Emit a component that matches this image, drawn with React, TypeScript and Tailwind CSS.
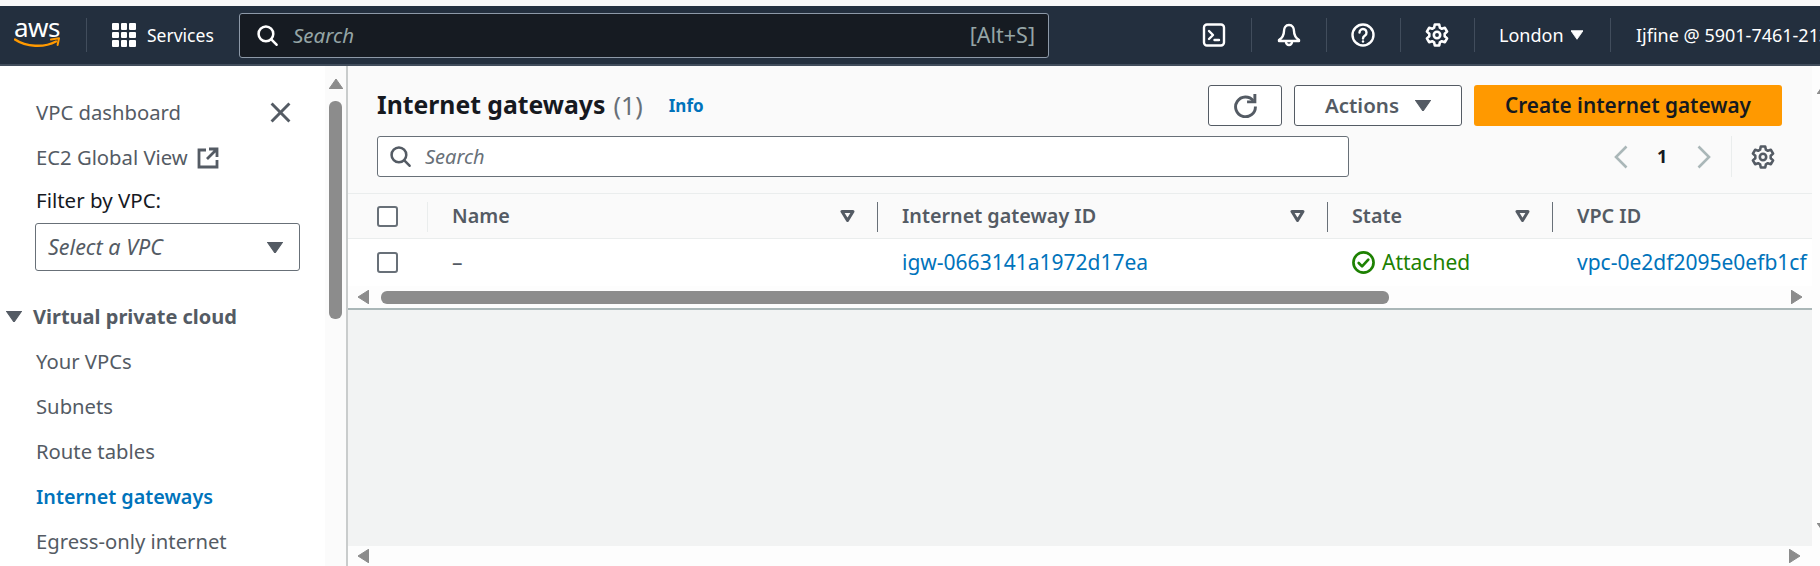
import React from 'react';

function Tri({ dir, className }: { dir: 'up' | 'down' | 'left' | 'right'; className: string }) {
  const pts = {
    up: '0,10 7,0 14,10',
    down: '0,0 14,0 7,10',
    left: '11,0 11,14 0,7',
    right: '0,0 0,14 11,7',
  }[dir];
  const box = dir === 'up' || dir === 'down' ? '0 0 14 10' : '0 0 11 14';
  return (
    <svg viewBox={box} className={className}>
      <polygon points={pts} fill="currentColor" stroke="currentColor" strokeLinejoin="round" strokeWidth="1" />
    </svg>
  );
}

function Gear({ className }: { className: string }) {
  return (
    <svg viewBox="0 0 24 24" fill="none" stroke="currentColor" strokeWidth="2.6" strokeLinejoin="round" className={className}>
      <path d="M9.8 1.5h4.4l.7 3.2 1.9 1.1 3.1-1 2.2 3.8-2.4 2.2v2.4l2.4 2.2-2.2 3.8-3.1-1-1.9 1.1-.7 3.2H9.8l-.7-3.2-1.9-1.1-3.1 1-2.2-3.8 2.4-2.2v-2.4L1.900 8.6 4.100 4.800l3.100 1 1.900-1.100z" />
      <circle cx="12" cy="12" r="3.2" />
    </svg>
  );
}

function SearchIcon({ className }: { className: string }) {
  return (
    <svg viewBox="0 0 20 20" fill="none" stroke="currentColor" strokeWidth="2.4" strokeLinecap="round" className={className}>
      <circle cx="8.5" cy="8.5" r="7" />
      <path d="M13.6 13.6 18.6 18.8" />
    </svg>
  );
}

function NavDivider({ className }: { className: string }) {
  return <div className={`w-px h-[34px] bg-[#414d5c] shrink-0 ${className}`} />;
}

function FilterIcon() {
  return (
    <svg viewBox="0 0 15 12" fill="none" stroke="currentColor" strokeWidth="3" strokeLinejoin="round" className="w-[15px] h-[12px] text-[#545b64]">
      <polygon points="2,1.500 13,1.500 7.500,10.500" />
    </svg>
  );
}

function Checkbox() {
  return <div className="w-[21px] h-[21px] rounded-[3px] border-2 border-[#687078] bg-white shrink-0" />;
}

function Col({ w, label, filter = true }: { w: string; label: string; filter?: boolean }) {
  return (
    <div className={`${w} shrink-0 h-full relative flex items-center justify-between pl-[25px] pr-[22px]`}>
      <div className="absolute left-0 top-[8px] h-[30px] w-px bg-[#687078]" />
      <span className="text-[19.75px] font-semibold text-[#545b64] whitespace-nowrap">{label}</span>
      {filter && <FilterIcon />}
    </div>
  );
}

const vpcLinks = ['Your VPCs', 'Subnets', 'Route tables'];

export default function App() {
  return (
    <div className="w-[1820px] h-[566px] overflow-hidden bg-white flex flex-col font-['Noto_Sans',sans-serif]">
      <div className="h-[6px] bg-[#f8f8f8] shrink-0" />

      {/* Top nav */}
      <header className="h-[60px] bg-[#232f3e] shrink-0 flex items-center pl-[14px] text-white border-b-2 border-[#414d5c] overflow-hidden">
        <div className="w-[46px] h-[30px] relative shrink-0 -mt-[2px]">
          <span className="absolute left-[0px] -top-[8px] text-[26px] leading-[32px] tracking-[-0.5px] text-white">aws</span>
          <svg viewBox="0 0 46 12" className="absolute left-0 bottom-0 w-[46px] h-[12px]" fill="none">
            <path d="M1 2.5C12 10 30 11 42 4.5" stroke="#ff9900" strokeWidth="2.4" strokeLinecap="round" />
            <path d="M37 2.5 45 1.2 43.6 8" stroke="#ff9900" strokeWidth="2" strokeLinecap="round" strokeLinejoin="round" />
          </svg>
        </div>
        <NavDivider className="ml-[26px]" />
        <div className="ml-[25px] grid grid-cols-3 gap-[2px] w-[24px] h-[24px] shrink-0">
          {Array.from({ length: 9 }).map((_, i) => (
            <div key={i} className="bg-white rounded-[1px]" />
          ))}
        </div>
        <div className="w-[103px] pl-[11px] shrink-0 text-[17.5px]">Services</div>
        <div className="w-[810px] h-[45px] shrink-0 bg-[#161b22] border border-[#8d99a8] rounded-[3px] flex items-center pl-[17px] pr-[13px]">
          <SearchIcon className="w-[21px] h-[21px] text-white" />
          <span className="ml-[15px] text-[20.5px] italic text-[#95a5a6]">Search</span>
          <span className="ml-auto text-[21.5px] text-[#95a5a6]">[Alt+S]</span>
        </div>

        <svg viewBox="0 0 24 24" fill="none" stroke="white" strokeWidth="2.4" className="ml-[153px] w-[24px] h-[24px] shrink-0">
          <rect x="2" y="1.5" width="20" height="21" rx="3" />
          <path d="M7 8l4 4-4 4M12.5 17H17" strokeLinecap="round" strokeLinejoin="round" />
        </svg>
        <NavDivider className="ml-[25px]" />
        <svg viewBox="0 0 24 24" fill="none" stroke="white" strokeWidth="2.4" strokeLinejoin="round" className="ml-[25px] w-[24px] h-[24px] shrink-0">
          <path d="M12 2c-3.5 0-5 3-5 6 0 4-2 7-5 9v1h20v-1c-3-2-5-5-5-9 0-3-1.500-6-5-6z" />
          <path d="M9 19a3 3 0 0 0 6 0" />
        </svg>
        <NavDivider className="ml-[25px]" />
        <svg viewBox="0 0 24 24" fill="none" stroke="white" strokeWidth="2.4" strokeLinecap="round" className="ml-[24px] w-[24px] h-[24px] shrink-0">
          <circle cx="12" cy="12" r="10.5" />
          <path d="M8.500 9.500a3.500 3.500 0 1 1 5.500 2.900c-1.300.9-2 1.500-2 3" />
          <path d="M12 18.400v.2" />
        </svg>
        <NavDivider className="ml-[25px]" />
        <Gear className="ml-[24px] w-[24px] h-[24px] shrink-0 text-white" />
        <NavDivider className="ml-[25px]" />
        <span className="ml-[24px] w-[72px] shrink-0 text-[18px]">London</span>
        <Tri dir="down" className="w-[12px] h-[10px] text-white shrink-0" />
        <NavDivider className="ml-[27px]" />
        <span className="ml-[25px] text-[18px] whitespace-nowrap">Ijfine @ 5901-7461-2134</span>
      </header>

      <div className="flex flex-1 min-h-0">
        {/* Side navigation */}
        <aside className="w-[348px] shrink-0 flex border-r-2 border-[#c9cccc] bg-white">
          <div className="w-[325px] shrink-0 pt-[24px] pl-[36px] text-[20.25px] text-[#545b64]">
            <div className="h-[45px] flex items-center justify-between pr-[34px]">
              <span>VPC dashboard</span>
              <svg viewBox="0 0 20 20" fill="none" stroke="#545b64" strokeWidth="2.8" className="w-[21px] h-[21px]">
                <path d="M1.500 1.500 18.500 18.500M18.500 1.500 1.500 18.500" />
              </svg>
            </div>
            <div className="h-[45px] flex items-center gap-[9px]">
              <span>EC2 Global View</span>
              <svg viewBox="0 0 22 22" fill="none" stroke="#545b64" strokeWidth="2.8" className="w-[22px] h-[22px]">
                <path d="M9 3H2v17h18v-7" />
                <path d="M12 2h8v8M19.500 2.500 10 12" />
              </svg>
            </div>
            <div className="h-[40px] flex items-center text-[20.5px] text-[#16191f]">Filter by VPC:</div>
            <div className="mt-[3px] -ml-px w-[265px] h-[48px] bg-white border border-[#687078] rounded-[3px] flex items-center justify-between pl-[12px] pr-[16px]">
              <span className="italic text-[21.5px]">Select a VPC</span>
              <Tri dir="down" className="w-[16px] h-[11px] text-[#545b64]" />
            </div>
            <div className="mt-[23px] -ml-[30px] h-[45px] flex items-center gap-[11px]">
              <Tri dir="down" className="w-[16px] h-[11px] text-[#545b64]" />
              <span className="font-bold text-[20px]">Virtual private cloud</span>
            </div>
            {vpcLinks.map((l) => (
              <div key={l} className="h-[45px] flex items-center">{l}</div>
            ))}
            <div className="h-[45px] flex items-center text-[19.75px] font-semibold text-[#0073bb]">Internet gateways</div>
            <div className="h-[45px] flex items-center whitespace-nowrap">Egress-only internet</div>
          </div>
          <div className="flex-1 bg-[#fbfbfb] flex flex-col items-center pt-[13px]">
            <Tri dir="up" className="w-[14px] h-[10px] text-[#8c8c8c]" />
            <div className="mt-[12px] w-[13px] h-[218px] rounded-[6px] bg-[#8c8c8c]" />
          </div>
        </aside>

        {/* Main content */}
        <main className="w-[1464px] shrink-0 flex flex-col bg-[#f2f3f3]">
          <section className="shrink-0 bg-[#fafafa] border-b-2 border-[#aab7b8]">
            <div className="pt-[19px] pl-[29px] pr-[30px] flex items-center h-[60px]">
              <h1 className="text-[24.75px] font-bold text-[#16191f] whitespace-nowrap leading-none">Internet gateways</h1>
              <span className="ml-[8px] text-[25px] text-[#687078] leading-none">(1)</span>
              <span className="ml-[26px] text-[17px] font-bold text-[#0073bb]">Info</span>
              <button className="ml-auto w-[74px] h-[41px] border border-[#545b64] rounded-[3px] bg-white flex items-center justify-center">
                <svg viewBox="0 0 24 24" fill="none" stroke="#545b64" strokeWidth="2.8" className="w-[25px] h-[25px]">
                  <path d="M19.500 7.500A9.500 9.500 0 1 0 21.500 13" />
                  <path d="M21 1v7.500h-7.500" />
                </svg>
              </button>
              <button className="ml-[12px] w-[168px] h-[41px] border border-[#545b64] rounded-[3px] bg-white flex items-center justify-center gap-[16px] text-[20.5px] font-semibold text-[#545b64]">
                Actions
                <Tri dir="down" className="w-[16px] h-[11px] text-[#545b64]" />
              </button>
              <button className="ml-[12px] w-[308px] h-[41px] rounded-[3px] bg-[#ff9900] text-[20.75px] font-semibold text-[#16191f] whitespace-nowrap">
                Create internet gateway
              </button>
            </div>

            <div className="mt-[10px] pl-[29px] flex items-center h-[41px]">
              <div className="w-[972px] h-[41px] bg-white border border-[#687078] rounded-[3px] flex items-center pl-[12px]">
                <SearchIcon className="w-[21px] h-[21px] text-[#545b64]" />
                <span className="ml-[14px] text-[20px] italic text-[#687078]">Search</span>
              </div>
              <svg viewBox="0 0 14 24" fill="none" stroke="#aab7b8" strokeWidth="2.6" className="ml-[265px] w-[14px] h-[24px]">
                <path d="M12.500 1.500 2 12l10.500 10.500" />
              </svg>
              <span className="ml-[29px] w-[10px] text-[18px] font-bold text-[#16191f]">1</span>
              <svg viewBox="0 0 14 24" fill="none" stroke="#aab7b8" strokeWidth="2.6" className="ml-[30px] w-[14px] h-[24px]">
                <path d="M1.500 1.500 12 12 1.500 22.500" />
              </svg>
              <div className="ml-[20px] w-px h-[41px] bg-[#eaeded]" />
              <Gear className="ml-[19px] w-[24px] h-[24px] text-[#545b64]" />
            </div>

            {/* Table */}
            <div className="mt-[16px] border-t border-[#eaeded] h-[46px] flex items-center border-b">
              <div className="w-[79px] shrink-0 h-full relative flex items-center pl-[29px]">
                <Checkbox />
              </div>
              <div className="w-[450px] shrink-0 h-full relative flex items-center justify-between pl-[25px] pr-[22px]">
                <div className="absolute left-0 top-[8px] h-[30px] w-px bg-[#eaeded]" />
                <span className="text-[19.75px] font-semibold text-[#545b64]">Name</span>
                <FilterIcon />
              </div>
              <Col w="w-[450px]" label="Internet gateway ID" />
              <Col w="w-[225px]" label="State" />
              <Col w="w-[260px]" label="VPC ID" filter={false} />
            </div>
            <div className="h-[47px] bg-white flex items-center text-[21px] whitespace-nowrap overflow-hidden">
              <div className="w-[79px] shrink-0 pl-[29px]">
                <Checkbox />
              </div>
              <div className="w-[450px] shrink-0 pl-[25px] text-[#545b64]">–</div>
              <div className="w-[450px] shrink-0 pl-[25px] text-[#0073bb]">igw-0663141a1972d17ea</div>
              <div className="w-[225px] shrink-0 pl-[25px] flex items-center gap-[7px] text-[#1d8102]">
                <svg viewBox="0 0 24 24" fill="none" stroke="#1d8102" strokeWidth="2.8" className="w-[23px] h-[23px]">
                  <circle cx="12" cy="12" r="10.500" />
                  <path d="M7 12.500l3.500 3.500L17 9" strokeLinecap="round" strokeLinejoin="round" />
                </svg>
                Attached
              </div>
              <div className="pl-[25px] text-[#0073bb]">vpc-0e2df2095e0efb1cf</div>
            </div>
            <div className="h-[22px] bg-[#fdfdfd] flex items-center pl-[10px] pr-[10px]">
              <Tri dir="left" className="w-[11px] h-[14px] text-[#8c8c8c]" />
              <div className="ml-[12px] w-[1008px] h-[13px] rounded-[6px] bg-[#8c8c8c]" />
              <Tri dir="right" className="ml-auto w-[11px] h-[14px] text-[#8c8c8c]" />
            </div>
          </section>

          <div className="flex-1" />

          <div className="h-[20px] shrink-0 bg-[#fdfdfd] flex items-center justify-between pl-[10px] pr-[12px]">
            <Tri dir="left" className="w-[11px] h-[14px] text-[#8c8c8c]" />
            <Tri dir="right" className="w-[11px] h-[14px] text-[#8c8c8c]" />
          </div>
        </main>

        {/* Page scrollbar, cut off at the window edge */}
        <div className="flex-1 bg-[#fdfdfd] flex flex-col items-start pl-[5px] pt-[18px]">
          <Tri dir="up" className="w-[14px] h-[10px] text-[#8c8c8c] shrink-0" />
          <Tri dir="down" className="mt-[429px] w-[14px] h-[10px] text-[#8c8c8c] shrink-0" />
        </div>
      </div>
    </div>
  );
}
